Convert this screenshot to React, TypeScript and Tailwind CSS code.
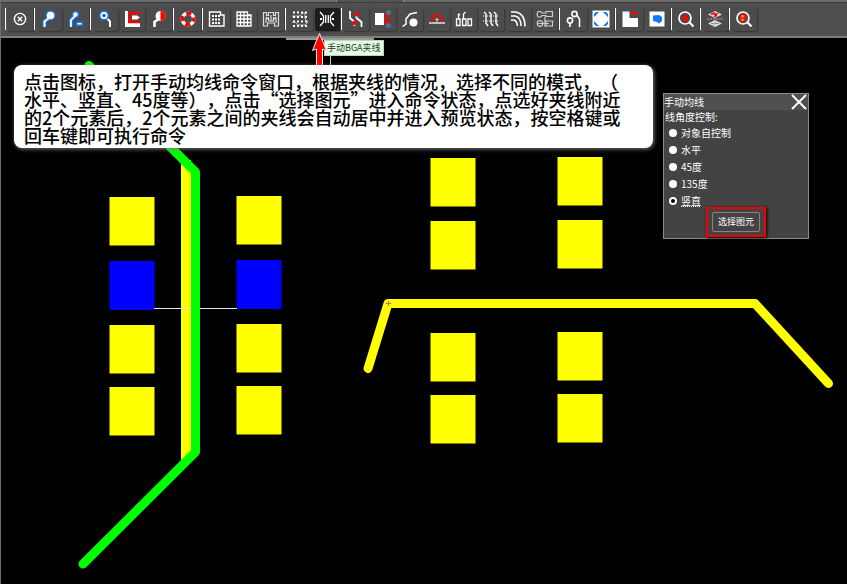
import React, { useState } from 'react';
import clsx from 'clsx';

type Tool = {
  name: string;
  icon: React.ReactNode;
  active?: boolean;
};

// every group starts with a white divider, icons are drawn on an 18x18 grid
const groups: Tool[][] = [
  [
    {
      name: '取消',
      icon: (
        <g stroke="#fff" strokeWidth="1.4">
          <circle cx="9" cy="9" r="5.6" />
          <path d="M6.8 6.8l4.4 4.4M11.2 6.8l-4.4 4.4" />
        </g>
      ),
    },
  ],
  [
    {
      name: '添加引线',
      icon: (
        <g>
          <path d="M9 8L4.5 11.5V16.5" stroke="#0a7bff" strokeWidth="4" />
          <circle cx="10.5" cy="5.5" r="5" fill="#0a7bff" />
          <path d="M9 8L4.5 11.5V17" stroke="#fff" strokeWidth="2" />
          <circle cx="10.5" cy="5.5" r="3.8" fill="#fff" />
        </g>
      ),
    },
    {
      name: '删除引线',
      icon: (
        <g>
          <path d="M8 6L4 10V16.5" stroke="#0a7bff" strokeWidth="4" />
          <circle cx="8.5" cy="4.5" r="3.6" fill="#0a7bff" />
          <path d="M8 6L4 10V17" stroke="#fff" strokeWidth="1.8" />
          <circle cx="8.5" cy="4.5" r="2.2" fill="#fff" />
          <path d="M9.7 12.2h5.6v3H9.7z" fill="#fff" stroke="#0a7bff" strokeWidth="1.4" />
        </g>
      ),
    },
  ],
  [
    {
      name: '焊盘引线',
      icon: (
        <g>
          <path d="M10.5 8L14 11.5V17" stroke="#fff" strokeWidth="2" />
          <circle cx="8" cy="5.5" r="5" fill="#0a7bff" />
          <circle cx="8" cy="5.5" r="2.6" fill="#505050" stroke="#fff" strokeWidth="1.8" />
        </g>
      ),
    },
    {
      name: '铜皮避让',
      icon: (
        <g>
          <path d="M2 1h3v11.5h12V17H2z" fill="#fff" />
          <path d="M17 3H6.2v9H17" stroke="#f00" strokeWidth="2.4" />
          <path d="M9 5.5h5L17 7.5l-3 2H9z" fill="#fff" />
        </g>
      ),
    },
    {
      name: '半圆引线',
      icon: (
        <g>
          <path d="M10 8L4.5 12V17" stroke="#fff" strokeWidth="2.6" />
          <circle cx="10.5" cy="6" r="5" fill="#fff" />
          <path d="M10.5 1a5 5 0 010 10z" fill="#f00" />
        </g>
      ),
    },
  ],
  [
    {
      name: '热焊盘',
      icon: (
        <g strokeWidth="3.6">
          <circle cx="9" cy="9" r="5.8" stroke="#fff" />
          <circle
            cx="9"
            cy="9"
            r="5.8"
            stroke="#f00"
            strokeDasharray="5.2 3.91"
            strokeDashoffset="2.6"
          />
        </g>
      ),
    },
  ],
  [
    {
      name: '焊盘阵列',
      icon: (
        <g stroke="#fff">
          <path d="M1.5 2h11v3H16v11H1.5z" strokeWidth="1.4" />
          <path
            d="M4 6h2m1 0h2m1 0h2M4 9.500h2m1 0h2m1 0h2M4 13h2m1 0h2m1 0h2"
            strokeWidth="2"
          />
        </g>
      ),
    },
    {
      name: '网格铜皮',
      icon: (
        <g stroke="#fff" strokeWidth="1.3">
          <path d="M2 2h10.5v3H16v11H2z" />
          <path d="M5.5 2v14M9 2v14M12.5 5v11M2 5.5h14M2 9h14M2 12.5h14" />
        </g>
      ),
    },
    {
      name: '蛇形线',
      icon: (
        <g stroke="#ddd" strokeWidth="1.2">
          <path d="M1.5 16V2.5h3v3h2v-3h5v3h2v-3h3V16h-4v-3h-7v3z" />
          <path d="M4 8v5M6.5 7v4h5V7M14 8v5M9 5v6M4 7l3 3M14 7l-3 3" />
        </g>
      ),
    },
  ],
  [
    {
      name: 'BGA夹线',
      icon: (
        <g>
          <path d="M1 6h8l3-3h2v6l3 3M1 12h3l3 3h7l3-3" stroke="#bbb" />
          <path
            d="M2 2.5h14M2 7h14M2 11.500h14M2 16h14"
            stroke="#fff"
            strokeWidth="2"
            strokeDasharray="2 2"
          />
        </g>
      ),
    },
    {
      name: '手动BGA夹线',
      active: true,
      icon: (
        <g stroke="#fff" strokeWidth="1.3">
          <path d="M2 2l3.500 4v6L2 16M16 2l-3.500 4v6l3.500 4M7.700 5v8M10.300 5v8" />
          <path d="M2 9h2M14 9h2" strokeWidth="2" />
        </g>
      ),
    },
  ],
  [
    {
      name: '差分对',
      icon: (
        <g>
          <path d="M3 1v7l4.500 4v4M9.500 2v6l5 4v5" stroke="#fff" strokeWidth="1.8" />
          <circle cx="9.500" cy="4.200" r="2.200" fill="#f00" />
          <circle cx="7.500" cy="13" r="2.200" fill="#f00" />
        </g>
      ),
    },
    {
      name: '元件引线',
      icon: (
        <g>
          <path d="M1 3h9v12H1z" fill="#fff" />
          <path d="M10 6h3M10 12h3" stroke="#f00" strokeWidth="3" />
          <path d="M14 4v10" stroke="#f00" strokeWidth="1.5" />
          <circle cx="14.5" cy="2.5" r="1.7" stroke="#4aa3ff" />
          <circle cx="14.5" cy="15.5" r="1.7" stroke="#4aa3ff" />
        </g>
      ),
    },
    {
      name: '圆点引线',
      icon: (
        <g>
          <path d="M1.500 16.500L5 14V9l4-5 7-1.500" stroke="#fff" strokeWidth="1.5" />
          <circle cx="12.500" cy="12.500" r="4" fill="#fff" />
        </g>
      ),
    },
    {
      name: '跨线',
      icon: (
        <g>
          <path d="M1 13h16" stroke="#fff" strokeWidth="1.3" />
          <path d="M3 12l3-6.500h6l3 6.500" stroke="#f00" strokeWidth="1.8" />
          <path d="M9 8v4M7.5 9.5h3" stroke="#ddd" />
        </g>
      ),
    },
    {
      name: '焊盘对齐',
      icon: (
        <g stroke="#fff" strokeWidth="1.3">
          <path d="M1.5 9h3.500v6.500H1.500zM7.500 9H11v6.500H7.500zM13 9h3.500v6.500H13z" />
          <path d="M3.500 9V3.500M3 6l2-2M8.500 9V4l2-2" />
        </g>
      ),
    },
    {
      name: '平行线',
      icon: (
        <g stroke="#fff" strokeWidth="1.4">
          <path d="M2 2l2 2v9l2 3M7 2l2 2v9l2 3M12 2l2 2v9l2 3" />
          <path d="M1 6h15M1 11h15" strokeDasharray="1 1" strokeWidth="1" />
        </g>
      ),
    },
    {
      name: '圆弧走线',
      icon: (
        <g stroke="#fff" strokeWidth="1.5">
          <path d="M2 2h5q9 2 9 14.500M2 6h4q6 1 6 10M2 10h3q3 1 3.500 6" />
        </g>
      ),
    },
    {
      name: '网络连接',
      icon: (
        <g stroke="#ccc" strokeWidth="1.2">
          <path d="M2 1.500h2.500L6 3h4V1.500h6.500v5H10V5.500H6L4.500 7H2L1 4.500z" />
          <path d="M9 6.500v4M10 11h6.500v5H10z" />
          <circle cx="4" cy="13.500" r="2.800" />
          <path d="M2 13.500h11M9 10v7" />
        </g>
      ),
    },
  ],
  [
    {
      name: '过孔引线',
      icon: (
        <g stroke="#fff" strokeWidth="1.6">
          <circle cx="9.5" cy="4" r="2.6" />
          <circle cx="5" cy="10.5" r="2.6" />
          <path d="M5 13v4M12 5.500l2.500 3.500v8" />
        </g>
      ),
    },
    {
      name: '全屏',
      icon: (
        <g>
          <path d="M.5.5h17v17H.5z" fill="#fff" />
          <path
            d="M2 7V4l2-2h3zM11 2h3l2 2v3zM16 11v3l-2 2h-3zM7 16H4l-2-2v-3z"
            fill="#0a7bff"
          />
          <circle cx="9" cy="9" r="5.3" fill="#fff" />
        </g>
      ),
    },
  ],
  [
    {
      name: '铜皮切角',
      icon: (
        <g>
          <path d="M1.500 1.500h7V8H17v9H1.500z" fill="#fff" />
          <path d="M9 3h8" stroke="#f00" strokeWidth="2.2" />
        </g>
      ),
    },
    {
      name: '铜皮形状',
      icon: (
        <g>
          <path d="M1.5 1.5h15v15h-15z" fill="#fff" />
          <path d="M5 5.500l6-.5 3 2v4l-3 2.500-2-1.500-4-1z" fill="#0a7bff" />
        </g>
      ),
    },
  ],
  [
    {
      name: '查找网络',
      icon: (
        <g>
          <circle cx="8" cy="8" r="6" stroke="#fff" strokeWidth="1.7" />
          <path d="M12.5 12.5L16.5 16.5" stroke="#fff" strokeWidth="2.2" />
          <path d="M4.500 8l2.500-1 .5-2 3-.5V9l-1 3.500-3-1z" fill="#f00" />
        </g>
      ),
    },
  ],
  [
    {
      name: '层对比',
      icon: (
        <g>
          <path d="M9 1l7 3.500L9 8 2 4.500zM9 10l7 3.500L9 17l-7-3.500z" fill="#ddd" />
          <path d="M5 4.500l3-1.500 1 1.500 3-1M8 6.500l3-1" stroke="#f00" strokeWidth="1.5" />
          <path d="M5 13.500h8M7 15.500l4-4" stroke="#999" />
          <path d="M1 9h16" stroke="#aaa" strokeDasharray="2 1" />
        </g>
      ),
    },
  ],
  [
    {
      name: '查找元件',
      icon: (
        <g>
          <circle cx="8" cy="8" r="6" stroke="#fff" strokeWidth="1.7" />
          <path d="M12.5 12.5L16.5 16.5" stroke="#fff" strokeWidth="2.2" />
          <path d="M5 4h6v8H5z" fill="#e11" />
          <path d="M6.500 6.200h3M6.500 9.800h3" stroke="#ffd500" strokeWidth="2" strokeDasharray="2 1" />
        </g>
      ),
    },
  ],
];

const pads = [
  [110, 197],
  [110, 325],
  [110, 387],
  [237, 196],
  [237, 324],
  [237, 386],
  [431, 158],
  [431, 221],
  [431, 333],
  [431, 395],
  [558, 157],
  [558, 220],
  [558, 332],
  [558, 394],
];
const selectedPads = [
  [110, 261],
  [237, 260],
];

const angles = ['对象自控制', '水平', '45度', '135度', '竖直'];

const helpLines = [
  '点击图标，打开手动均线命令窗口，根据夹线的情况，选择不同的模式，（',
  '水平、竖直、45度等），点击“选择图元”进入命令状态，点选好夹线附近',
  '的2个元素后，2个元素之间的夹线会自动居中并进入预览状态，按空格键或',
  '回车键即可执行命令',
];

function Toolbar() {
  return (
    <header className="border-b-2 border-[#7d7d7d] bg-[#505050]">
      <div className="flex h-[3px] border-b border-[#3c3c3c] bg-[#6c6c6c]">
        <div className="w-[335px]" />
        <div className="w-[68px] border-x border-[#8a8a8a] bg-[#555]" />
      </div>
      <div className="flex h-[33px] items-center pb-px pl-1">
        {groups.map((tools, i) => (
          <div key={i} className="flex items-center">
            <div className="h-[22px] w-0.5 border-l border-white" />
            {tools.map((tool) => (
              <button
                key={tool.name}
                type="button"
                aria-label={tool.name}
                className={clsx(
                  'mx-px flex h-[23px] w-[25px] items-center justify-center rounded-xs pr-px shadow-[1px_1px_2px_#333]',
                  tool.active ? 'bg-[#1d1d1d]' : 'bg-[#4c4c4c]'
                )}
              >
                <svg width="18" height="18" viewBox="0 0 18 18" fill="none">
                  {tool.icon}
                </svg>
              </button>
            ))}
          </div>
        ))}
      </div>
    </header>
  );
}

function Board() {
  return (
    <svg
      className="absolute top-0 left-0"
      width="847"
      height="584"
      viewBox="0 0 847 584"
      fill="none"
    >
      {pads.map(([x, y]) => (
        <rect key={`${x}-${y}`} x={x - 0.5} y={y} width="45" height="48.5" fill="#ff0" />
      ))}
      {selectedPads.map(([x, y]) => (
        <rect key={`${x}-${y}`} x={x - 0.5} y={y} width="45" height="49" fill="#00f" />
      ))}
      <path d="M186 160V460" stroke="#ff0" strokeWidth="10" />
      <path d="M154 308.5H237" stroke="#e8e8e8" />
      <path
        d="M89 65.500L195.500 172V452L83 564"
        stroke="#0f0"
        strokeWidth="9"
        strokeLinecap="round"
        strokeLinejoin="round"
      />
      <path
        d="M368 368.5L388 303.5H755L828.5 383.5"
        stroke="#ff0"
        strokeWidth="9"
        strokeLinecap="round"
        strokeLinejoin="round"
      />
      <path d="M386 303.5h5M388.5 301v5" stroke="#f0508c" />
      {/* cursor cross hair */}
      <path d="M286 39H374" stroke="#9a9a9a" strokeWidth="2" />
      <path d="M330.5 40V66" stroke="#ccc" />
    </svg>
  );
}

function AngleWindow() {
  const [angle, setAngle] = useState('竖直');
  return (
    <section className="absolute top-[93px] left-[663px] h-[146px] w-[146px] border border-[#8c8c8c] bg-[#434343] font-['Noto_Sans_CJK_SC',sans-serif] text-[10px] text-white">
      <div className="flex h-4 items-center justify-between bg-[#505050]">
        <h2 className="leading-4">手动均线</h2>
        <button type="button" aria-label="关闭" className="mr-px">
          <svg width="16" height="16" viewBox="0 0 16 16" stroke="#fff" strokeWidth="2">
            <path d="M1 1l14 14M15 1L1 15" />
          </svg>
        </button>
      </div>
      <fieldset>
        <legend className="pl-px leading-[14px]">线角度控制:</legend>
        {angles.map((item) => (
          <label key={item} className="flex h-[17px] items-center gap-1 pl-[5px]">
            <input
              type="radio"
              name="angle"
              value={item}
              checked={angle === item}
              onChange={() => setAngle(item)}
              className="size-2 appearance-none rounded-full bg-white checked:border-2 checked:border-white checked:bg-black"
            />
            <span className={clsx(angle === item && 'underline decoration-dotted')}>{item}</span>
          </label>
        ))}
      </fieldset>
      <div className="absolute top-[113px] left-[42px] border-2 border-[#f00000] px-1 py-[3px] shadow-[1px_1px_3px_#000]">
        <button
          type="button"
          className="flex h-5 w-12 items-center justify-center rounded-xs border border-[#9a7c7c] bg-[#434343] text-[9px]"
        >
          选择图元
        </button>
      </div>
    </section>
  );
}

export default function App() {
  return (
    <div className="relative min-h-screen overflow-hidden border-l border-[#6e6e6e] bg-black">
      <Toolbar />
      <main className="absolute inset-y-0 -left-px w-full">
        <Board />
        <div
          role="tooltip"
          className="absolute top-10 left-[324px] border border-[#b9d6b9] bg-[#e1ffe1] px-0.5 font-['Noto_Sans_CJK_SC',sans-serif] text-[9px] leading-[14px] whitespace-nowrap text-[#333]"
        >
          手动BGA夹线
        </div>
        <svg className="absolute top-8 left-[310px]" width="20" height="34" viewBox="0 0 20 34">
          <path
            d="M9.5 1.5L16.5 18.5L12.5 17V34H6.5V17L2.5 18.5Z"
            fill="#f00"
            stroke="#eee"
            strokeWidth="1"
          />
        </svg>
        <p className="absolute top-[65px] left-[14px] w-[639px] rounded-lg bg-white pt-[7px] pb-1 pl-[10px] font-['Noto_Sans_CJK_SC',sans-serif] text-[18px] leading-[18px] font-medium text-black shadow-[1px_1px_4px_#777] [text-spacing-trim:space-all]">
          {helpLines.map((line) => (
            <span key={line} className="block whitespace-nowrap">
              {line}
            </span>
          ))}
        </p>
        <AngleWindow />
      </main>
    </div>
  );
}
